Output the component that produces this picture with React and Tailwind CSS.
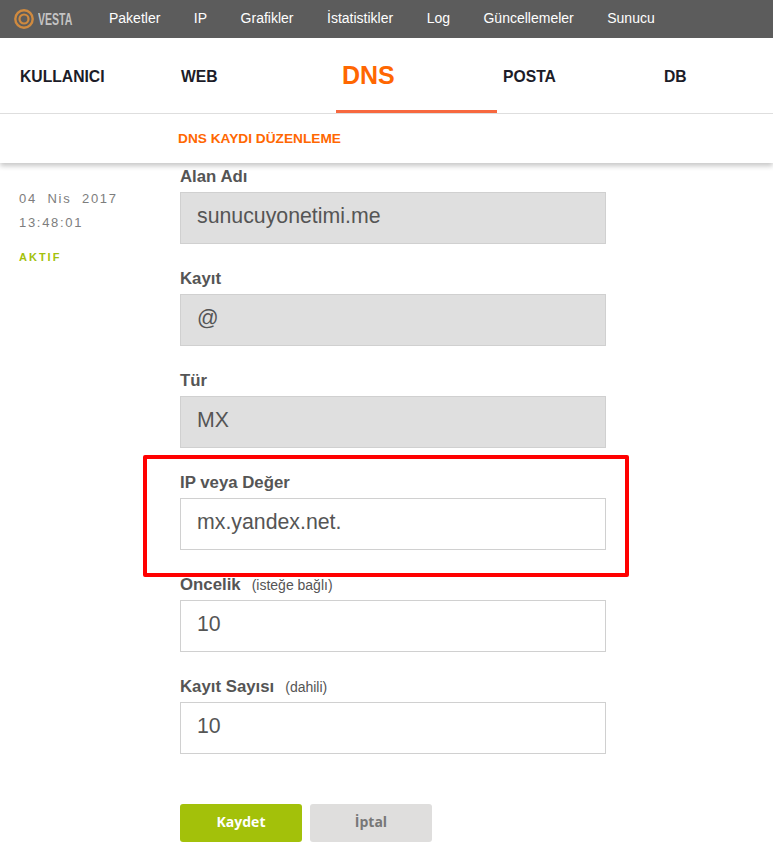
const navItems = ['Paketler', 'IP', 'Grafikler', 'İstatistikler', 'Log', 'Güncellemeler', 'Sunucu'];
const tabs = ['KULLANICI', 'WEB', 'DNS', 'POSTA', 'DB'];

const fields = [
    { label: 'Alan Adı', value: 'sunucuyonetimi.me', disabled: true },
    { label: 'Kayıt', value: '@', disabled: true },
    { label: 'Tür', value: 'MX', disabled: true },
    { label: 'IP veya Değer', value: 'mx.yandex.net.' },
    { label: 'Öncelik', hint: '(isteğe bağlı)', value: '10' },
    { label: 'Kayıt Sayısı', hint: '(dahili)', value: '10' },
];

const Logo = () => (
    <div className="flex items-center gap-[4px] w-[95px]">
        <svg width="20" height="20" viewBox="0 0 20 20" fill="none">
            <circle cx="10" cy="10" r="8.7" stroke="#cf8a3f" strokeWidth="2.4" />
            <circle cx="10" cy="10" r="4.5" stroke="#cf8a3f" strokeWidth="2.2" />
        </svg>
        <span className="text-[17px] leading-none font-bold text-[#c4c4c4] scale-x-[0.62] origin-left">VESTA</span>
    </div>
);

const Field = ({ label, hint, value, disabled }) => (
    <div className="h-[102px]">
        <div className="h-[24px] flex items-baseline text-[16.8px] leading-[18px] font-bold text-[#555]">
            {label}
            {hint && <span className="ml-[11px] text-[14px] font-normal">{hint}</span>}
        </div>
        <div className={`w-[426px] h-[52px] flex items-center pl-[16px] pb-[2px] border border-[#d0d0d0] text-[21.3px] text-[#555] ${disabled ? 'bg-[#dfdfdf]' : 'bg-white'}`}>
            {value}
        </div>
    </div>
);

export default function App() {
    return (
        <div className="relative w-[773px] h-[853px] overflow-hidden bg-white font-['Liberation_Sans',sans-serif]">
            <div className="relative z-10 bg-white shadow-[0_3px_5px_rgba(0,0,0,0.22)]">
                <div className="h-[38px] bg-[#5c5c5c] flex items-center pl-[14px]">
                    <Logo />
                    <div className="flex gap-[33.5px] pb-[1px] text-[14px] text-white">
                        {navItems.map((item) => (
                            <span key={item}>{item}</span>
                        ))}
                    </div>
                </div>
                <div className="h-[76px] flex pl-[14px] border-b border-[#dedede]">
                    {tabs.map((tab) => (
                        <div
                            key={tab}
                            className={tab === 'DNS'
                                ? 'w-[161px] shrink-0 pl-[6px] pt-[4px] flex items-center border-b-[3px] border-[#f7683f] text-[25px] font-bold text-[#ff6701]'
                                : 'w-[161px] shrink-0 pl-[6px] pt-[3px] flex items-center text-[15.7px] font-bold text-[#1c1c28]'}
                        >
                            {tab}
                        </div>
                    ))}
                </div>
                <div className="h-[49px] pl-[178px] pt-[1px] flex items-center text-[13.7px] font-bold text-[#ff6701]">
                    DNS KAYDI DÜZENLEME
                </div>
            </div>

            <div className="flex">
                <div className="w-[180px] pl-[19px] pt-[23px] text-[13px] text-[#7d7d7d] tracking-[1.7px]">
                    <div className="leading-[25px] whitespace-pre">04  Nis  2017</div>
                    <div className="leading-[24px]">13:48:01</div>
                    <div className="mt-[14px] text-[11px] font-bold tracking-[2px] text-[#a3c10c]">AKTIF</div>
                </div>
                <div className="pt-[5px]">
                    {fields.map((field) => (
                        <Field key={field.label} {...field} />
                    ))}
                    <div className="flex gap-[8px] mt-[24px]">
                        <button className="w-[122px] h-[38px] pb-[3px] rounded-[3px] bg-[#a3c10a] text-white text-[14px] font-bold font-['Open_Sans',sans-serif]">Kaydet</button>
                        <button className="w-[122px] h-[38px] pb-[3px] rounded-[3px] bg-[#dfdedd] text-[#777] text-[14px] font-bold font-['Open_Sans',sans-serif]">İptal</button>
                    </div>
                </div>
            </div>

            {/* annotation over the form */}
            <div className="absolute left-[143px] top-[455px] w-[486px] h-[122px] border-[4px] border-[#ff0000] rounded-[2px] z-20" />
        </div>
    );
}
